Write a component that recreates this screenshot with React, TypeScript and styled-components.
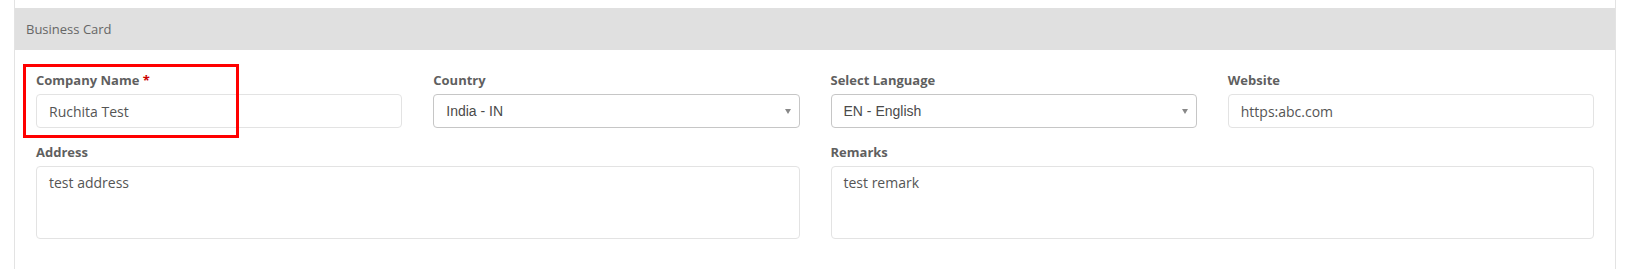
import React from "react";
import styled, { createGlobalStyle } from "styled-components";

const GlobalStyle = createGlobalStyle`
  html, body {
    margin: 0;
    padding: 0;
    background: #ffffff;
  }
  body {
    font-family: "Open Sans", "Liberation Sans", Arial, sans-serif;
    color: #555555;
  }
`;

interface FieldProps {
  label: string;
  required?: boolean;
  span?: number;
  children: React.ReactNode;
}

const Field = ({ label, required, span = 1, children }: FieldProps) => {
  return (
    <FieldWrapper $span={span}>
      <Label>
        {label}
        {required && <Star> *</Star>}
      </Label>
      {children}
    </FieldWrapper>
  );
};

const SelectBox = ({ value }: { value: string }) => {
  return (
    <Select>
      <SelectText>{value}</SelectText>
      <Arrow />
    </Select>
  );
};

const App = () => {
  return (
    <>
      <GlobalStyle />
      <Page>
        <Panel>
          <PanelHeading>Business Card</PanelHeading>
          <PanelBody>
            <Highlight />
            <FormGrid>
              <Field label="Company Name" required>
                <TextInput>Ruchita Test</TextInput>
              </Field>
              <Field label="Country">
                <SelectBox value="India - IN" />
              </Field>
              <Field label="Select Language">
                <SelectBox value="EN - English" />
              </Field>
              <Field label="Website">
                <TextInput>https:abc.com</TextInput>
              </Field>
              <Field label="Address" span={2}>
                <TextArea>test address</TextArea>
              </Field>
              <Field label="Remarks" span={2}>
                <TextArea>test remark</TextArea>
              </Field>
            </FormGrid>
          </PanelBody>
        </Panel>
      </Page>
    </>
  );
};

const Page = styled.div`
  height: 269px;
  overflow: hidden;
  padding-left: 14px;
  width: 1602px;
`;

const Panel = styled.div`
  border-left: 1px solid #e3e3e3;
  border-right: 1px solid #e3e3e3;
  padding-top: 8px;
  min-height: 300px;
`;

const PanelHeading = styled.div`
  height: 42px;
  background: #e0e0e0;
  display: flex;
  align-items: center;
  padding-left: 11px;
  font-size: 13px;
  color: #666666;
`;

const PanelBody = styled.div`
  position: relative;
  padding: 21px 21px 20px 21px;
`;

/* screenshot annotation drawn over the first field */
const Highlight = styled.div`
  position: absolute;
  left: 8px;
  top: 14px;
  width: 216px;
  height: 74px;
  box-sizing: border-box;
  border: 3px solid #ff0000;
  pointer-events: none;
`;

const FormGrid = styled.div`
  display: grid;
  grid-template-columns: repeat(4, 1fr);
  column-gap: 31px;
  row-gap: 15px;
`;

const FieldWrapper = styled.div<{ $span: number }>`
  grid-column: span ${(p) => p.$span};
  display: flex;
  flex-direction: column;
`;

const Label = styled.div`
  font-size: 13px;
  line-height: 18px;
  font-weight: 700;
  color: #5f5f5f;
  margin-bottom: 5px;
`;

const Star = styled.span`
  color: #cc0000;
`;

const TextInput = styled.div`
  height: 34px;
  box-sizing: border-box;
  border: 1px solid #e3e3e3;
  border-radius: 4px;
  padding: 0 12px;
  display: flex;
  align-items: center;
  font-size: 14px;
  color: #555555;
`;

const Select = styled.div`
  height: 34px;
  box-sizing: border-box;
  border: 1px solid #c6c6c6;
  border-radius: 4px;
  padding: 0 12px;
  display: flex;
  align-items: center;
  justify-content: space-between;
`;

const SelectText = styled.span`
  font-family: "Liberation Sans", Arial, sans-serif;
  font-size: 14px;
  color: #4a4a4a;
`;

const Arrow = styled.span`
  width: 0;
  height: 0;
  border-style: solid;
  border-width: 5px 3.5px 0 3.5px;
  border-color: #888888 transparent transparent transparent;
  margin-right: -4px;
`;

const TextArea = styled.div`
  height: 73px;
  box-sizing: border-box;
  border: 1px solid #e3e3e3;
  border-radius: 4px;
  padding: 6px 12px;
  font-size: 14px;
  line-height: 20px;
  color: #555555;
`;

export default App;
